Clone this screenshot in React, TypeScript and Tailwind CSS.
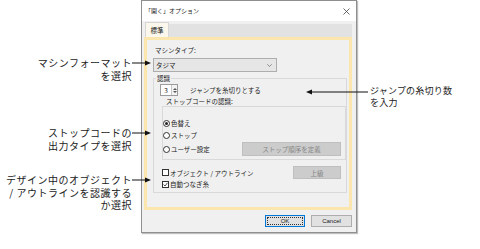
import React from "react";

const jp = "font-['Noto_Sans_CJK_JP','Noto_Sans',sans-serif]";

const ArrowRight = () => (
  <svg width="19" height="6" viewBox="0 0 19 6" className="shrink-0 -mr-[10px]">
    <line x1="0" y1="3" x2="15" y2="3" stroke="#111" strokeWidth="1" />
    <polygon points="13,0.5 19,3 13,5.5" fill="#111" />
  </svg>
);

const LeftCallout = ({ lines }: { lines: string[] }) => (
  <div className="flex flex-col">
    {lines.map((line, i) => (
      <div key={i} className="flex items-center justify-end">
        <span className="text-right whitespace-nowrap">{line}</span>
        {i === 0 ? <ArrowRight /> : <span className="w-[9px] shrink-0" />}
      </div>
    ))}
  </div>
);

const Radio = ({ checked, label }: { checked?: boolean; label: string }) => (
  <div className="flex items-center h-[12px]">
    <span className="w-[7px] h-[7px] rounded-full border border-[#333] bg-white flex items-center justify-center">
      {checked && <span className="w-[3px] h-[3px] rounded-full bg-[#222]" />}
    </span>
    <span className="ml-[1px]">{label}</span>
  </div>
);

const Check = ({ checked, label }: { checked?: boolean; label: string }) => (
  <div className="flex items-center">
    <span className="w-[7px] h-[7px] border border-[#333] bg-white flex items-center justify-center">
      {checked && (
        <svg width="5" height="5" viewBox="0 0 5 5">
          <polyline points="0.5,2.5 2,4 4.5,0.8" fill="none" stroke="#222" strokeWidth="0.8" />
        </svg>
      )}
    </span>
    <span className="ml-[1px]">{label}</span>
  </div>
);

const Dialog = () => (
  <div className={`w-[216px] h-[233px] border border-[#8f8f8f] bg-[#f0f0f0] flex flex-col text-[#1a1a1a] ${jp} text-[6.5px] leading-[10px] shadow-[1px_1px_1px_rgba(0,0,0,0.25)]`}>
    {/* title bar */}
    <div className="h-[20px] bg-white flex items-center justify-between pl-[3px] pr-[6px]">
      <span className="text-[6px]">「開く」オプション</span>
      <svg width="7" height="7" viewBox="0 0 7 7">
        <line x1="0.5" y1="0.5" x2="6.5" y2="6.5" stroke="#444" strokeWidth="0.8" />
        <line x1="6.5" y1="0.5" x2="0.5" y2="6.5" stroke="#444" strokeWidth="0.8" />
      </svg>
    </div>

    {/* tab strip */}
    <div className="h-[16px] flex items-end pl-[3px] pr-[4px]">
      <div className="w-[24px] h-[15px] bg-[#fbf7ec] border border-b-0 border-[#d6d6d6] flex items-center justify-center">
        標準
      </div>
      <div className="flex-1 h-[13px] bg-[#e2e2e2]" />
    </div>

    {/* panel */}
    <div className="ml-[2px] w-[208px] h-[173px] border-[3px] border-[#fbe6ad] flex flex-col">
      <div className="mt-[5px] ml-[8px]">マシンタイプ:</div>
      <div className="mt-[3px] ml-[6px] w-[124px] h-[14px] bg-[#e6e6e6] border border-[#adadad] flex items-center justify-between pl-[2px] pr-[4px]">
        <span>タジマ</span>
        <svg width="5" height="3" viewBox="0 0 5 3">
          <polyline points="0.3,0.3 2.5,2.5 4.7,0.3" fill="none" stroke="#666" strokeWidth="0.7" />
        </svg>
      </div>

      <fieldset className="mt-[1px] ml-[6px] w-[194px] h-[120px] border border-[#d9d9d9] flex flex-col">
        <legend className="ml-[2px] px-[1px] leading-[10px]">認識</legend>

        <div className="mt-[1px] ml-[6px] flex items-center">
          <div className="flex h-[12px] border border-[#9c9c9c] bg-white">
            <span className="w-[10px] flex items-center justify-center">3</span>
            <span className="w-[6px] border-l border-[#c8c8c8] flex flex-col items-center justify-center gap-[1px] bg-[#f3f3f3]">
              <svg width="4" height="2" viewBox="0 0 4 2"><polygon points="0,2 2,0 4,2" fill="#555" /></svg>
              <svg width="4" height="2" viewBox="0 0 4 2"><polygon points="0,0 2,2 4,0" fill="#555" /></svg>
            </span>
          </div>
          <span className="ml-[12px]">ジャンプを糸切りとする</span>
        </div>

        <div className="ml-[12px]">ストップコードの認識:</div>
        <div className="mt-[0px] ml-[8px] w-[184px] border border-[#d9d9d9] pt-[10px] pb-[3px] pl-[0px] flex flex-col">
          <Radio checked label="色替え" />
          <Radio label="ストップ" />
          <div className="flex items-center justify-between h-[14px] mt-[1px] pr-[4px]">
            <Radio label="ユーザー設定" />
            <div className="w-[99px] h-[14px] bg-[#cccccc] border border-[#bfbfbf] text-[#858585] flex items-center justify-center">
              ストップ順序を定義
            </div>
          </div>
        </div>

        <div className="mt-[6px] ml-[8px] mr-[5px] flex items-center justify-between h-[13px]">
          <Check label="オブジェクト / アウトライン" />
          <div className="w-[48px] h-[13px] bg-[#cccccc] border border-[#bfbfbf] text-[#858585] flex items-center justify-center">
            上級
          </div>
        </div>
        <div className="ml-[8px] h-[10px] flex items-center">
          <Check checked label="自動つなぎ糸" />
        </div>
      </fieldset>
    </div>

    {/* buttons */}
    <div className="mt-[5px] mr-[4px] flex justify-end gap-[6px]">
      <div className="w-[40px] h-[12px] bg-[#e1e1e1] border border-[#0078d7] p-[1px]">
        <div className="w-full h-full border border-dotted border-[#333] flex items-center justify-center text-[6px] font-['Liberation_Sans',sans-serif]">
          OK
        </div>
      </div>
      <div className="w-[41px] h-[12px] bg-[#e1e1e1] border border-[#adadad] flex items-center justify-center text-[6px] font-['Liberation_Sans',sans-serif]">
        Cancel
      </div>
    </div>
  </div>
);

export default function App() {
  return (
    <div className={`w-[480px] h-[249px] bg-white flex overflow-hidden ${jp}`}>
      {/* left callouts */}
      <div className="relative z-10 w-[141px] shrink-0 flex flex-col text-[10px] leading-[12.5px] tracking-[0.5px] text-[#222]">
        <div className="mt-[57px]">
          <LeftCallout lines={["マシンフォーマット", "を選択"]} />
        </div>
        <div className="mt-[45px]">
          <LeftCallout lines={["ストップコードの", "出力タイプを選択"]} />
        </div>
        <div className="mt-[22px]">
          <LeftCallout lines={["デザイン中のオブジェクト", "/ アウトラインを認識する", "か選択"]} />
        </div>
      </div>

      <Dialog />

      {/* right callout */}
      <div className="relative flex-1">
        <div className="relative mt-[85px] ml-[13px] text-[9px] leading-[11.5px] tracking-[0.2px] text-[#222]">
          <svg width="62" height="6" viewBox="0 0 62 6" className="absolute left-[-64px] top-[4px]">
            <polygon points="0,3 6,0.5 6,5.5" fill="#111" />
            <line x1="4" y1="3" x2="62" y2="3" stroke="#111" strokeWidth="1" />
          </svg>
          <div>ジャンプの糸切り数</div>
          <div>を入力</div>
        </div>
      </div>
    </div>
  );
}
